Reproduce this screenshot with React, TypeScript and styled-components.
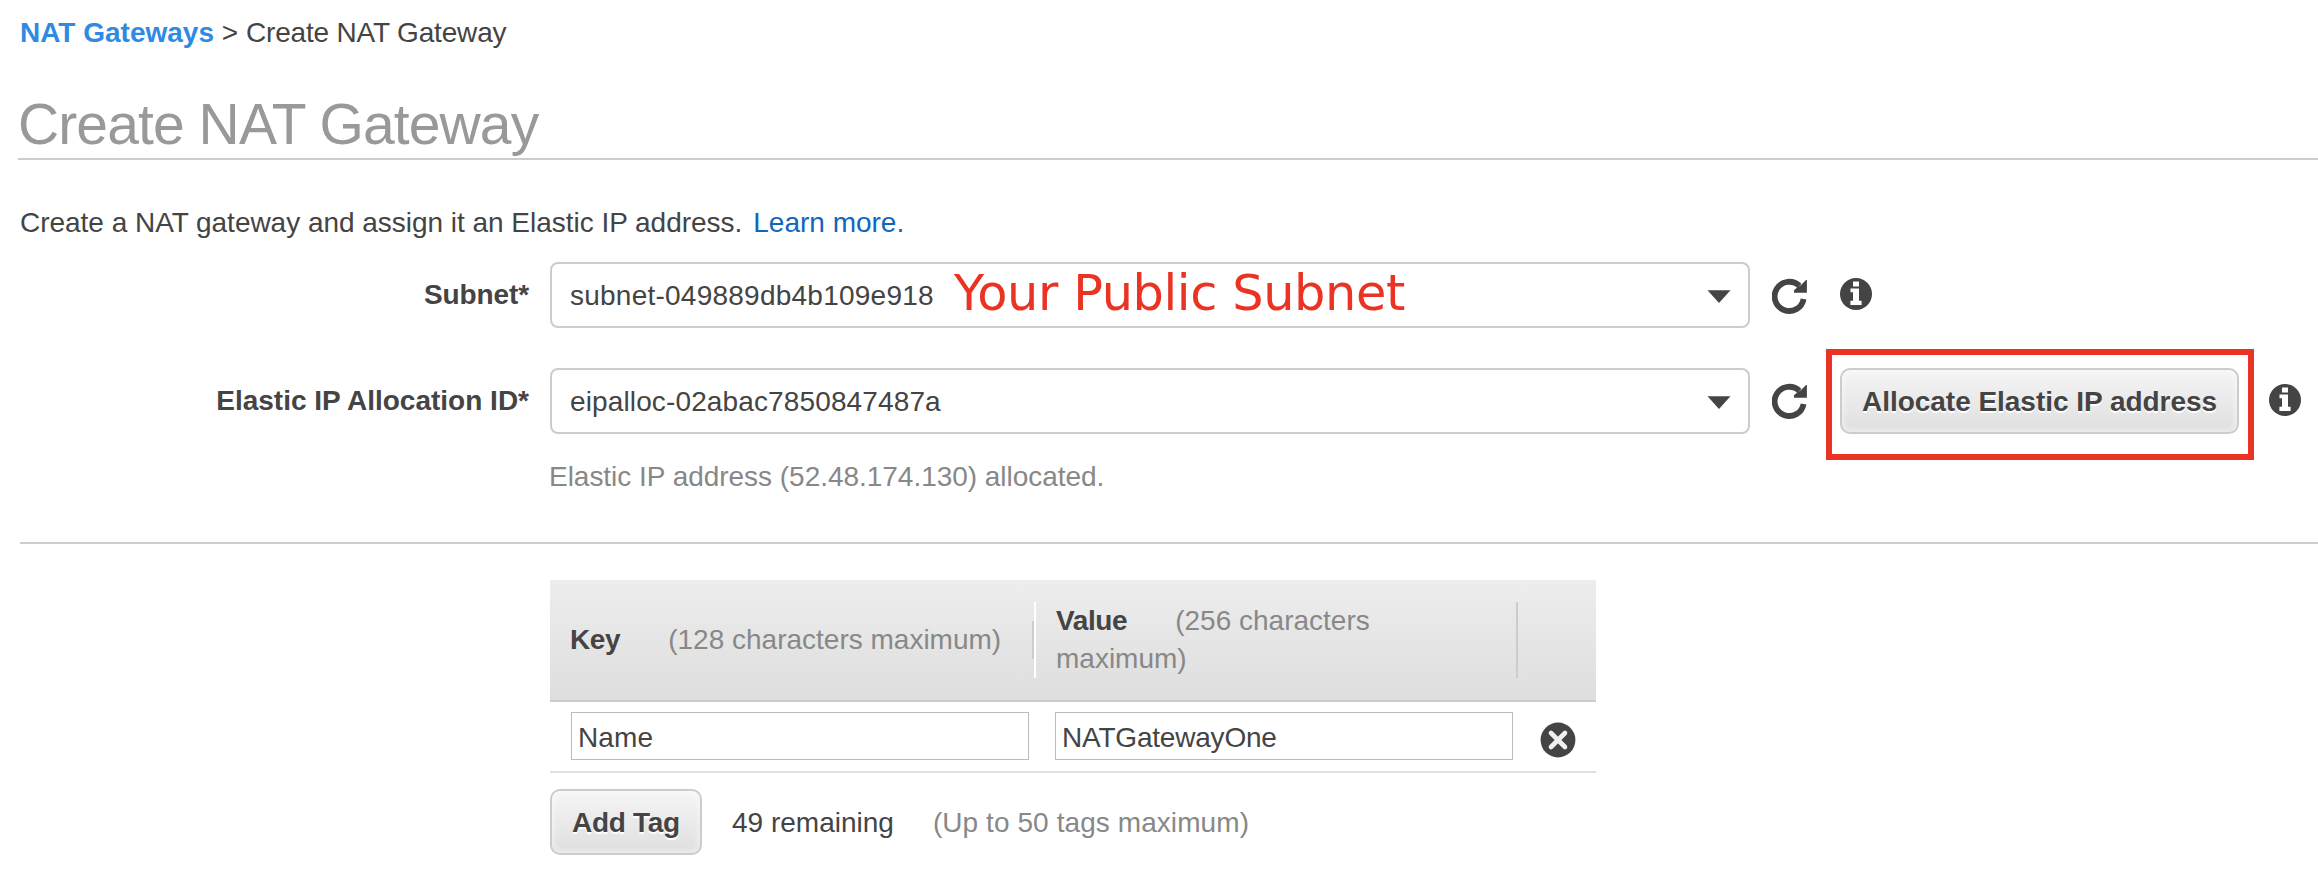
import React from 'react';
import styled, { createGlobalStyle } from 'styled-components';

const INK = '#444';
const MUTED = '#888';
const LINE = '#ccc';
const MARKER = '#ea3323';

const GlobalStyle = createGlobalStyle`
  * { box-sizing: border-box; }
  body {
    margin: 0;
    background: #fff;
    color: ${INK};
    font: 28px/37px "Liberation Sans", Arial, sans-serif;
  }
`;

const Page = styled.main`
  display: flex;
  flex-direction: column;
  min-height: 876px;
  overflow: hidden;
  padding-top: 14px;
`;

const Breadcrumb = styled.nav`
  padding-left: 20px;
  white-space: pre;
`;

const CrumbLink = styled.a`
  color: #2e8ae2;
  font-weight: bold;
  text-decoration: none;
`;

const Crumb = styled.span`
  letter-spacing: -0.17px;
`;

const Title = styled.h1`
  margin: 42px 0 0 18px;
  padding-bottom: 2px;
  border-bottom: 2px solid ${LINE};
  color: #999;
  font-size: 57px;
  font-weight: normal;
  line-height: 63px;
  letter-spacing: -0.9px;
`;

const Intro = styled.p`
  display: flex;
  gap: 11px;
  margin: 44px 0 21px 20px;
  letter-spacing: -0.026px;
`;

const LearnMore = styled.a`
  color: #1166bb;
  letter-spacing: 0;
  text-decoration: none;
`;

const Form = styled.form`
  display: flex;
  flex-direction: column;
  gap: 40px;
`;

const FormRow = styled.div`
  display: flex;
  align-items: flex-start;
  height: 66px;
`;

const Label = styled.label<{ $tracking?: number }>`
  flex: none;
  width: 529px;
  font-weight: bold;
  line-height: 65px;
  text-align: right;
  letter-spacing: ${(p) => p.$tracking ?? 0}px;
`;

const Select = styled.div<{ $tracking: number }>`
  position: relative;
  display: flex;
  flex: none;
  justify-content: space-between;
  align-items: flex-start;
  width: 1200px;
  height: 66px;
  margin-left: 21px;
  padding: 13px 17px 0 18px;
  border: 2px solid ${LINE};
  border-radius: 8px;
  background: #fff;
  letter-spacing: ${(p) => p.$tracking}px;
`;

const Caret = styled.svg`
  width: 24px;
  height: 13px;
  margin-top: 13px;
`;

const SubnetNote = styled.span`
  position: absolute;
  left: 402px;
  top: 0;
  color: ${MARKER};
  font: 49.4px/58px "DejaVu Sans", Verdana, sans-serif;
  letter-spacing: -0.4px;
  white-space: nowrap;
`;

const RefreshIcon = styled.svg<{ $top: number }>`
  flex: none;
  width: 36px;
  height: 36px;
  margin: ${(p) => p.$top}px 0 0 22px;
`;

const InfoIcon = styled.svg<{ $gap: number }>`
  flex: none;
  width: 32px;
  height: 32px;
  margin: 16px 0 0 ${(p) => p.$gap}px;
`;

const Marked = styled.div`
  position: relative;
  flex: none;
  margin-left: 32px;
  &::after {
    content: '';
    position: absolute;
    inset: -19px -15px -26px -14px;
    border: 6px solid ${MARKER};
    pointer-events: none;
  }
`;

const Button = styled.button<{ $width: number; $tracking?: number }>`
  display: block;
  width: ${(p) => p.$width}px;
  height: 66px;
  padding: 0 0 0 20px;
  border: 2px solid ${LINE};
  border-radius: 10px;
  background: linear-gradient(#f5f5f5, #dfdfdf);
  box-shadow: inset 0 0 6px 1px rgba(255, 255, 255, 0.6);
  color: ${INK};
  font: bold 28px/37px "Liberation Sans", Arial, sans-serif;
  letter-spacing: ${(p) => p.$tracking ?? 0}px;
  text-align: left;
  text-shadow: 0 2px 0 #fff;
  white-space: nowrap;
`;

const Hint = styled.span`
  color: ${MUTED};
`;

const AllocationStatus = styled.p`
  margin: 24px 0 0 549px;
  color: ${MUTED};
  letter-spacing: -0.03px;
`;

const Divider = styled.hr`
  width: auto;
  height: 2px;
  margin: 47px 0 36px 20px;
  border: 0;
  background: ${LINE};
`;

const TagEditor = styled.section`
  width: 1046px;
  margin-left: 550px;
`;

const TagHeader = styled.div`
  display: grid;
  grid-template-columns: 484px 484px 1fr;
  align-items: center;
  height: 122px;
  border-bottom: 2px solid ${LINE};
  background: linear-gradient(#ededed, #dedede);
  line-height: 38px;
`;

const HeaderCell = styled.div<{ $first?: boolean }>`
  padding: 0 20px;
  border-left: ${(p) => (p.$first ? 'none' : '2px solid #fff')};
  border-right: 2px solid ${LINE};
`;

const HeaderName = styled.b<{ $gap: number }>`
  margin-right: ${(p) => p.$gap}px;
  letter-spacing: -0.4px;
`;

const TagRow = styled.div`
  display: grid;
  grid-template-columns: 484px 484px 1fr;
  align-items: start;
  height: 71px;
  padding: 10px 0 0 21px;
  border-bottom: 2px solid #e0e0e0;
`;

const TagInput = styled.input<{ $tracking: number }>`
  width: 458px;
  height: 48px;
  padding: 3px 6px 0;
  border: 1px solid #bbb;
  border-radius: 0;
  outline: none;
  background: #fff;
  color: ${INK};
  font: 28px/37px "Liberation Sans", Arial, sans-serif;
  letter-spacing: ${(p) => p.$tracking}px;
`;

const RemoveIcon = styled.svg`
  width: 36px;
  height: 36px;
  margin: 10px 0 0 1px;
`;

const TagFooter = styled.div`
  display: flex;
  align-items: flex-start;
  margin-top: 16px;
`;

const Remaining = styled.span`
  margin: 15px 39px 0 30px;
`;

const Limit = styled(Hint)`
  margin-top: 15px;
  letter-spacing: 0.08px;
`;

const DropCaret = () => (
  <Caret viewBox="0 0 24 13">
    <path d="M0.5 0.3H23.5L12 13Z" fill={INK} />
  </Caret>
);

const Refresh = ({ top = 16 }: { top?: number }) => (
  <RefreshIcon $top={top} viewBox="0 0 36 36">
    <path d="M31.6 20.9A14.6 14.6 0 1 1 27.4 7.9" fill="none" stroke={INK} strokeWidth="5.8" />
    <path d="M34.9 2V14.8H22V12.2L25.2 9.4L29 7L34 2Z" fill={INK} />
  </RefreshIcon>
);

const Info = ({ gap }: { gap: number }) => (
  <InfoIcon $gap={gap} viewBox="0 0 32 32">
    <circle cx="16" cy="16" r="16" fill={INK} />
    <path d="M13 3.6H19V8.6H13ZM10.5 10.5H19V22.8H21.6V27H10.4V22.8H13V14.3H10.5Z" fill="#fff" />
  </InfoIcon>
);

export default function App() {
  return (
    <>
      <GlobalStyle />
      <Page>
        <Breadcrumb>
          <CrumbLink>NAT Gateways</CrumbLink>
          {' > '}
          <Crumb>Create NAT Gateway</Crumb>
        </Breadcrumb>
        <Title>Create NAT Gateway</Title>
        <Intro>
          <span>Create a NAT gateway and assign it an Elastic IP address.</span>
          <LearnMore>Learn more.</LearnMore>
        </Intro>

        <Form>
          <FormRow>
            <Label $tracking={-0.1}>Subnet*</Label>
            <Select $tracking={0.237}>
              <span>subnet-049889db4b109e918</span>
              <SubnetNote>Your Public Subnet</SubnetNote>
              <DropCaret />
            </Select>
            <Refresh />
            <Info gap={32} />
          </FormRow>
          <FormRow>
            <Label>Elastic IP Allocation ID*</Label>
            <Select $tracking={0.13}>
              <span>eipalloc-02abac7850847487a</span>
              <DropCaret />
            </Select>
            <Refresh top={15} />
            <Marked>
              <Button type="button" $width={399} $tracking={-0.03}>Allocate Elastic IP address</Button>
            </Marked>
            <Info gap={30} />
          </FormRow>
        </Form>
        <AllocationStatus>Elastic IP address (52.48.174.130) allocated.</AllocationStatus>
        <Divider />

        <TagEditor>
          <TagHeader>
            <HeaderCell $first>
              <HeaderName $gap={48}>Key</HeaderName>
              <Hint>(128 characters maximum)</Hint>
            </HeaderCell>
            <HeaderCell>
              <HeaderName $gap={48}>Value</HeaderName>
              <Hint>(256 characters maximum)</Hint>
            </HeaderCell>
          </TagHeader>
          <TagRow>
            <TagInput $tracking={0.1} defaultValue="Name" />
            <TagInput $tracking={-0.2} defaultValue="NATGatewayOne" />
            <RemoveIcon viewBox="0 0 36 36">
              <circle cx="18" cy="18" r="17.4" fill={INK} />
              <path d="M11 11L25 25M25 11L11 25" stroke="#f0f0f0" strokeWidth="4.6" strokeLinecap="round" />
            </RemoveIcon>
          </TagRow>
          <TagFooter>
            <Button type="button" $width={152} $tracking={-0.3}>Add Tag</Button>
            <Remaining>49 remaining</Remaining>
            <Limit>(Up to 50 tags maximum)</Limit>
          </TagFooter>
        </TagEditor>
      </Page>
    </>
  );
}
